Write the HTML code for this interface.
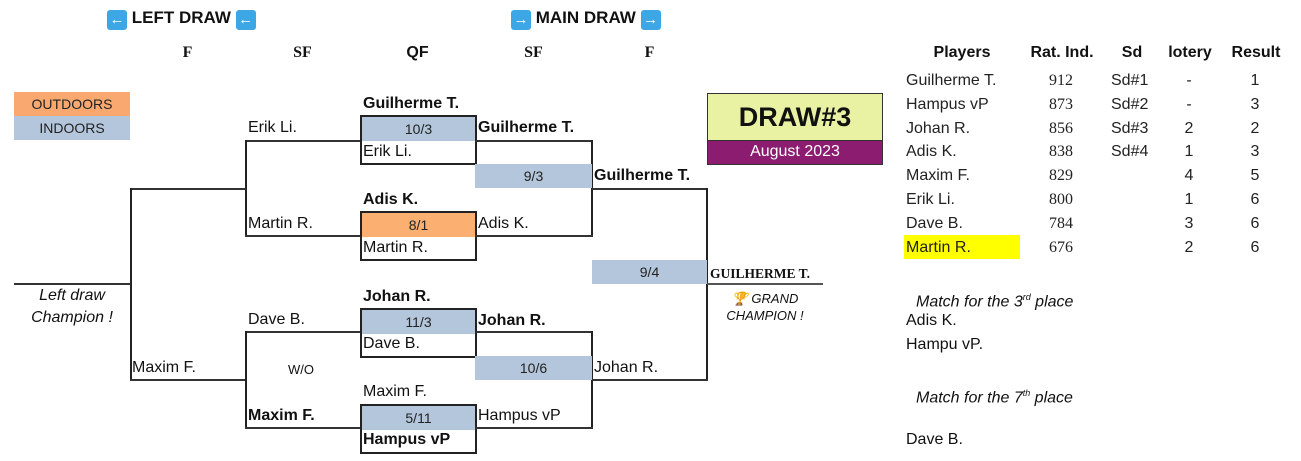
<!DOCTYPE html>
<html><head><meta charset="utf-8"><style>
*{margin:0;padding:0;box-sizing:border-box}
body{width:1301px;height:461px;background:#fff;position:relative;overflow:hidden;font-family:"Liberation Sans",sans-serif;font-size:16px;color:#111}
.t{position:absolute;white-space:nowrap;line-height:24px;height:24px}
.b{font-weight:bold}
.c{text-align:center}
.s{font-family:"Liberation Serif",serif;font-weight:bold}
.h{position:absolute;height:2px;background:#333}
.v{position:absolute;width:2px;background:#222}
.box{position:absolute;border:2px solid #222;width:117px;height:50px}
.cell{position:absolute;text-align:center;font-size:14px;line-height:24px;height:24px;color:#222}
.bl{background:#b4c6dc}.or{background:#fbb072}
.ic{display:inline-block;width:20px;height:20px;background:#3da7e6;border-radius:3px;color:#fff;font-size:15px;line-height:20px;text-align:center;vertical-align:-1px;font-weight:bold}
</style></head><body>
<div class="t b" style="left:107px;top:6px;font-size:17px"><span class="ic">&#8592;</span> LEFT DRAW <span class="ic">&#8592;</span></div>
<div class="t b" style="left:511px;top:6px;font-size:17px"><span class="ic">&#8594;</span> MAIN DRAW <span class="ic">&#8594;</span></div>
<div class="t s c" style="left:130px;width:115px;top:41px">F</div>
<div class="t s c" style="left:245px;width:115px;top:41px">SF</div>
<div class="t b c" style="left:360px;width:115px;top:41px">QF</div>
<div class="t s c" style="left:475px;width:117px;top:41px">SF</div>
<div class="t s c" style="left:592px;width:115px;top:41px">F</div>

<div class="cell" style="left:14px;top:92px;width:116px;background:#f9a870">OUTDOORS</div>
<div class="cell bl" style="left:14px;top:116px;width:116px">INDOORS</div>

<div class="t" style="left:248px;top:116px">Erik Li.</div>
<div class="h" style="left:245px;top:140px;width:116px"></div>
<div class="v" style="left:245px;top:140px;height:97px"></div>
<div class="t" style="left:248px;top:212px">Martin R.</div>
<div class="h" style="left:245px;top:235px;width:116px"></div>
<div class="h" style="left:130px;top:188px;width:116px"></div>
<div class="v" style="left:130px;top:188px;height:193px"></div>
<div class="h" style="left:14px;top:283px;width:117px"></div>
<div class="t" style="left:132px;top:356px">Maxim F.</div>
<div class="h" style="left:130px;top:379px;width:116px"></div>
<div class="t c" style="left:14px;top:285px;width:116px;font-style:italic;line-height:22px;height:44px;white-space:normal">Left draw<br>Champion !</div>

<div class="t" style="left:248px;top:308px">Dave B.</div>
<div class="h" style="left:245px;top:331px;width:116px"></div>
<div class="v" style="left:245px;top:331px;height:98px"></div>
<div class="t" style="left:288px;top:358px;font-size:13px">W/O</div>
<div class="t b" style="left:248px;top:404px">Maxim F.</div>
<div class="h" style="left:245px;top:427px;width:116px"></div>

<div class="t b" style="left:363px;top:92px">Guilherme T.</div>
<div class="box" style="left:360px;top:115px"></div>
<div class="cell bl" style="left:362px;top:117px;width:113px">10/3</div>
<div class="t" style="left:363px;top:140px">Erik Li.</div>

<div class="t b" style="left:363px;top:188px">Adis K.</div>
<div class="box" style="left:360px;top:211px"></div>
<div class="cell or" style="left:362px;top:213px;width:113px">8/1</div>
<div class="t" style="left:363px;top:236px">Martin R.</div>

<div class="t b" style="left:363px;top:285px">Johan R.</div>
<div class="box" style="left:360px;top:308px"></div>
<div class="cell bl" style="left:362px;top:310px;width:113px">11/3</div>
<div class="t" style="left:363px;top:332px">Dave B.</div>

<div class="t" style="left:363px;top:380px">Maxim F.</div>
<div class="box" style="left:360px;top:404px"></div>
<div class="cell bl" style="left:362px;top:406px;width:113px">5/11</div>
<div class="t b" style="left:363px;top:428px">Hampus vP</div>

<div class="t b" style="left:478px;top:116px">Guilherme T.</div>
<div class="h" style="left:475px;top:140px;width:118px"></div>
<div class="v" style="left:591px;top:140px;height:97px"></div>
<div class="cell bl" style="left:475px;top:164px;width:117px">9/3</div>
<div class="t" style="left:478px;top:212px">Adis K.</div>
<div class="h" style="left:475px;top:235px;width:118px"></div>

<div class="t b" style="left:478px;top:309px">Johan R.</div>
<div class="h" style="left:475px;top:331px;width:118px"></div>
<div class="v" style="left:591px;top:331px;height:98px"></div>
<div class="cell bl" style="left:475px;top:356px;width:117px">10/6</div>
<div class="t" style="left:478px;top:404px">Hampus vP</div>
<div class="h" style="left:475px;top:427px;width:118px"></div>

<div class="t b" style="left:594px;top:164px">Guilherme T.</div>
<div class="h" style="left:592px;top:188px;width:116px"></div>
<div class="v" style="left:706px;top:188px;height:193px"></div>
<div class="cell bl" style="left:592px;top:260px;width:115px">9/4</div>
<div class="t" style="left:594px;top:356px">Johan R.</div>
<div class="h" style="left:592px;top:379px;width:116px"></div>

<div class="t s" style="left:710px;top:262px;font-size:13.5px">GUILHERME T.</div>
<div class="h" style="left:707px;top:283px;width:116px;background:#555"></div>
<div class="t c" style="left:707px;top:290px;width:116px;font-style:italic;font-size:13px;line-height:17px;height:34px;white-space:normal"><span style="color:#c9a000">&#127942;</span> GRAND<br>CHAMPION !</div>

<div style="position:absolute;left:707px;top:93px;width:176px;height:48px;background:#e9f2a2;border:1.5px solid #333;font:bold 27px 'Liberation Sans',sans-serif;text-align:center;line-height:46px">DRAW#3</div>
<div style="position:absolute;left:707px;top:141px;width:176px;height:24px;background:#8b1c6f;border:1.5px solid #333;border-top:none;color:#fff;text-align:center;line-height:22px;font-size:16px">August 2023</div>

<div class="t b c" style="left:902px;width:120px;top:41px">Players</div>
<div class="t b c" style="left:1022px;width:80px;top:41px">Rat. Ind.</div>
<div class="t b c" style="left:1112px;width:40px;top:41px">Sd</div>
<div class="t b c" style="left:1160px;width:60px;top:41px">lotery</div>
<div class="t b c" style="left:1225px;width:62px;top:41px">Result</div>
<div style="position:absolute;left:904px;top:235px;width:116px;height:24px;background:#ffff00"></div>
<div style="position:absolute;left:906px;top:69px;line-height:23.8px;color:#222">Guilherme T.<br>Hampus vP<br>Johan R.<br>Adis K.<br>Maxim F.<br>Erik Li.<br>Dave B.<br>Martin R.</div>
<div style="position:absolute;left:1036px;width:50px;text-align:center;top:69px;line-height:23.8px;font-family:'Liberation Serif',serif;color:#222">912<br>873<br>856<br>838<br>829<br>800<br>784<br>676</div>
<div style="position:absolute;left:1111px;top:69px;line-height:23.8px;color:#222">Sd#1<br>Sd#2<br>Sd#3<br>Sd#4</div>
<div style="position:absolute;left:1169px;width:40px;text-align:center;top:69px;line-height:23.8px;color:#222">-<br>-<br>2<br>1<br>4<br>1<br>3<br>2</div>
<div style="position:absolute;left:1235px;width:40px;text-align:center;top:69px;line-height:23.8px;color:#222">1<br>3<br>2<br>3<br>5<br>6<br>6<br>6</div>

<div class="t" style="left:916px;top:285px;font-style:italic">Match for the 3<sup style="font-size:9px">rd</sup> place</div>
<div class="t" style="left:906px;top:309px">Adis K.</div>
<div class="t" style="left:906px;top:333px">Hampu vP.</div>
<div class="t" style="left:916px;top:381px;font-style:italic">Match for the 7<sup style="font-size:9px">th</sup> place</div>
<div class="t" style="left:906px;top:428px">Dave B.</div>
</body></html>
